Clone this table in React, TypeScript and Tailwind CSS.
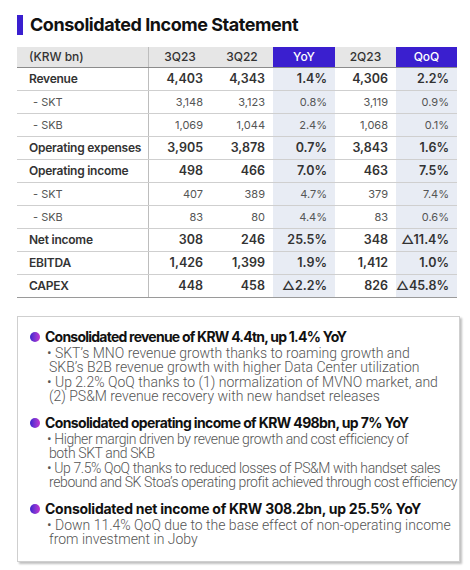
import React from "react";

type Row = {
  label: string;
  sub?: boolean;
  vals: [string, string, string, string, string];
};

const ROWS: Row[] = [
  { label: "Revenue", vals: ["4,403", "4,343", "1.4%", "4,306", "2.2%"] },
  { label: "- SKT", sub: true, vals: ["3,148", "3,123", "0.8%", "3,119", "0.9%"] },
  { label: "- SKB", sub: true, vals: ["1,069", "1,044", "2.4%", "1,068", "0.1%"] },
  { label: "Operating expenses", vals: ["3,905", "3,878", "0.7%", "3,843", "1.6%"] },
  { label: "Operating income", vals: ["498", "466", "7.0%", "463", "7.5%"] },
  { label: "- SKT", sub: true, vals: ["407", "389", "4.7%", "379", "7.4%"] },
  { label: "- SKB", sub: true, vals: ["83", "80", "4.4%", "83", "0.6%"] },
  { label: "Net income", vals: ["308", "246", "25.5%", "348", "△11.4%"] },
  { label: "EBITDA", vals: ["1,426", "1,399", "1.9%", "1,412", "1.0%"] },
  { label: "CAPEX", vals: ["448", "458", "△2.2%", "826", "△45.8%"] },
];

const HEADERS = ["3Q23", "3Q22", "YoY", "2Q23", "QoQ"];

// each item is split into the lines the slide wraps at
const SECTIONS = [
  {
    title: "Consolidated revenue of KRW 4.4tn, up 1.4% YoY",
    titleCls: "tracking-[-0.055em]",
    bodyCls: "tracking-normal",
    items: [
      [
        "SKT’s MNO revenue growth thanks to roaming growth and",
        "SKB’s B2B revenue growth with higher Data Center utilization",
      ],
      [
        "Up 2.2% QoQ thanks to (1) normalization of MVNO market, and",
        "(2) PS&M revenue recovery with new handset releases",
      ],
    ],
  },
  {
    title: "Consolidated operating income of KRW 498bn, up 7% YoY",
    titleCls: "tracking-[-0.045em]",
    bodyCls: "tracking-[-0.028em]",
    items: [
      ["Higher margin driven by revenue growth and cost efficiency of", "both SKT and SKB"],
      [
        "Up 7.5% QoQ thanks to reduced losses of PS&M with handset sales",
        "rebound and SK Stoa’s operating profit achieved through cost efficiency",
      ],
    ],
  },
  {
    title: "Consolidated net income of KRW 308.2bn, up 25.5% YoY",
    titleCls: "tracking-[-0.018em]",
    bodyCls: "tracking-normal",
    items: [
      [
        "Down 11.4% QoQ due to the base effect of non-operating income",
        "from investment in Joby",
      ],
    ],
  },
];

export default function App() {
  return (
    <div
      className="w-[470px] h-[570px] bg-white overflow-hidden pt-[15px] pl-[17px]"
      style={{ fontFamily: "Inter, 'Liberation Sans', sans-serif" }}
    >
      {/* Title */}
      <div className="flex items-center gap-[7px] h-[20px]">
        <div className="w-[6px] h-[20px] bg-[#3a1fcf]" />
        <h1 className="text-[18px] font-bold text-[#111] tracking-[-0.025em] leading-none">
          Consolidated Income Statement
        </h1>
      </div>

      {/* Table */}
      <div className="mt-[12px] w-[440px] text-[#333]">
        <div className="grid grid-cols-[132px_62px_62px_62px_61px_61px] h-[21px] text-[12px] font-medium border-b border-[#8c8c8c]">
          <div className="bg-[#e6e6e6] flex items-center pl-[12px] border-r border-[#bdbdbd]">
            (KRW bn)
          </div>
          {HEADERS.map((h) => {
            const hi = h === "YoY" || h === "QoQ";
            return (
              <div
                key={h}
                className={
                  hi
                    ? "bg-[#3a1fcf] text-white flex items-center justify-center"
                    : "bg-[#e6e6e6] flex items-center justify-center"
                }
              >
                {h}
              </div>
            );
          })}
        </div>

        {ROWS.map((r, i) => (
          <div
            key={i}
            className={
              i === ROWS.length - 1
                ? "grid grid-cols-[132px_62px_62px_62px_61px_61px] h-[23px] border-b border-[#9a9a9a]"
                : "grid grid-cols-[132px_62px_62px_62px_61px_61px] h-[23px] border-b border-[#cfcfcf]"
            }
          >
            <div
              className={
                r.sub
                  ? "flex items-center pl-[16px] border-r border-[#bdbdbd] text-[11px] text-[#555]"
                  : "flex items-center pl-[12px] border-r border-[#bdbdbd] text-[12px] font-semibold tracking-[-0.02em]"
              }
            >
              {r.label}
            </div>
            {r.vals.map((v, j) => (
              <div
                key={j}
                className={[
                  "flex items-center justify-end pr-[8px]",
                  j === 2 || j === 4 ? "bg-[#e8ecf4]" : "",
                  r.sub ? "text-[11px] text-[#555]" : "text-[12.5px] font-semibold",
                ].join(" ")}
              >
                {v}
              </div>
            ))}
          </div>
        ))}
      </div>

      {/* Summary box */}
      <div className="mt-[18px] w-[443px] h-[246px] border border-[#cfcfcf] shadow-[2px_2px_2px_rgba(0,0,0,0.25)] pt-[11px] pl-[12px] flex flex-col gap-[11px]">
        {SECTIONS.map((s) => (
          <div key={s.title}>
            <div className="flex items-center gap-[5px] h-[18px]">
              <span className="w-[10px] h-[10px] rounded-full bg-gradient-to-r from-[#3a1fd0] to-[#c22fd0] shrink-0" />
              <span
                className={
                  "text-[14px] font-bold text-[#111] leading-none whitespace-nowrap " +
                  s.titleCls
                }
              >
                {s.title}
              </span>
            </div>
            <ul
              className={
                "pl-[19px] text-[14px] leading-[14px] text-[#555] font-light whitespace-nowrap " +
                s.bodyCls
              }
              style={{ fontFamily: "Roboto, 'Liberation Sans', sans-serif" }}
            >
              {s.items.map((lines) => (
                <li key={lines[0]} className="-indent-[2px] mt-[1px] first:mt-0">
                  {lines.map((ln, k) => (
                    <span key={k}>
                      {k === 0 ? "• " : <br />}
                      {ln}
                    </span>
                  ))}
                </li>
              ))}
            </ul>
          </div>
        ))}
      </div>
    </div>
  );
}
